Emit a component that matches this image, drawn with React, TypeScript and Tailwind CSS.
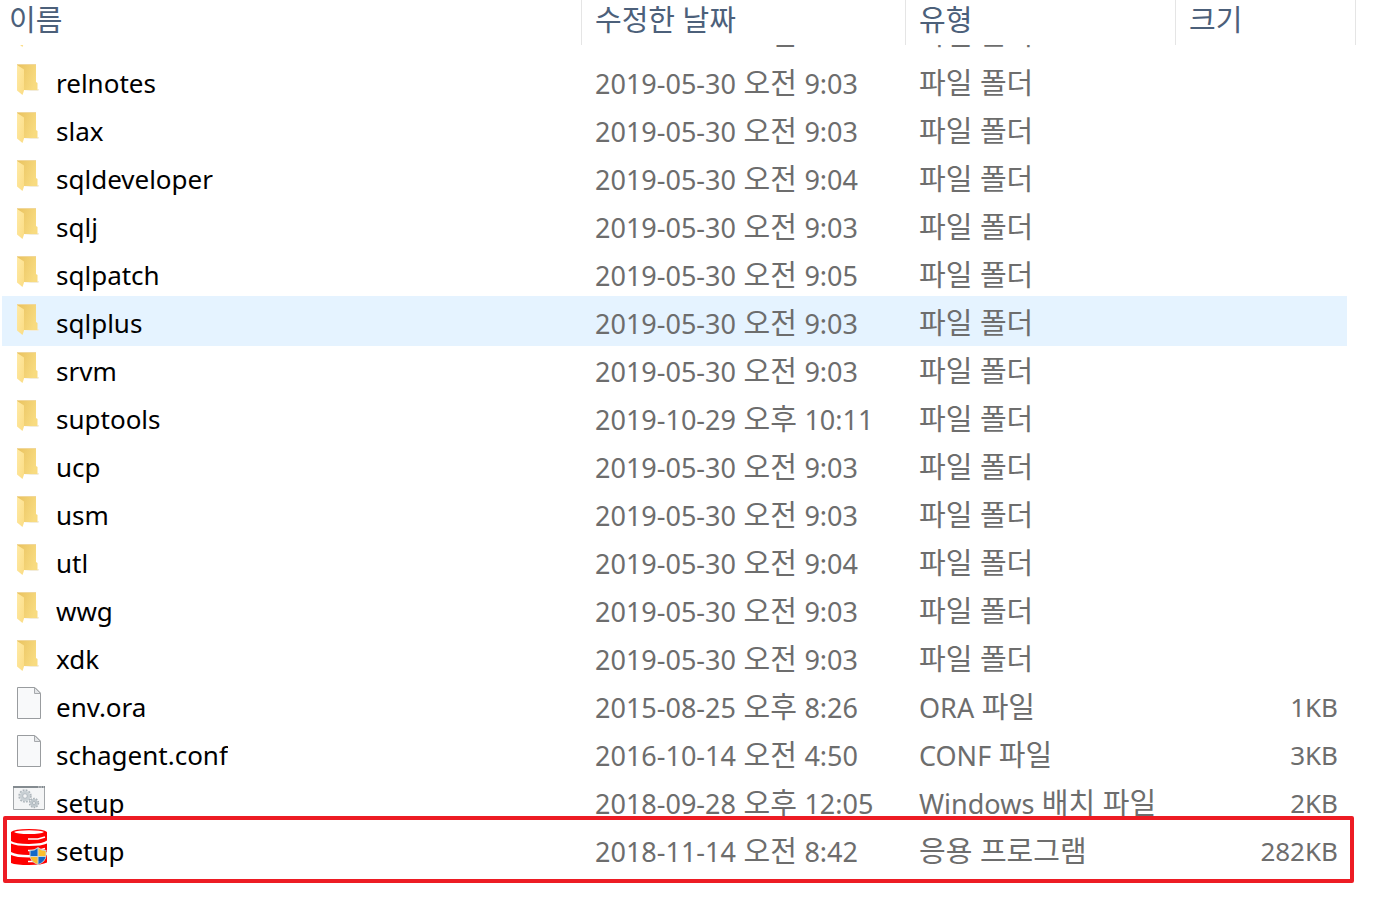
import clsx from 'clsx'

type FileKind = 'folder' | 'page' | 'batch' | 'database'

interface FileEntry {
  name: string
  modified: string
  type: string
  size?: string
  kind: FileKind
  hovered?: boolean
  outlined?: boolean
}

function folder(name: string, modified: string, hovered = false): FileEntry {
  return { name, modified, type: '파일 폴더', kind: 'folder', hovered }
}

const files: FileEntry[] = [
  folder('relnotes', '2019-05-30 오전 9:03'),
  folder('slax', '2019-05-30 오전 9:03'),
  folder('sqldeveloper', '2019-05-30 오전 9:04'),
  folder('sqlj', '2019-05-30 오전 9:03'),
  folder('sqlpatch', '2019-05-30 오전 9:05'),
  folder('sqlplus', '2019-05-30 오전 9:03', true),
  folder('srvm', '2019-05-30 오전 9:03'),
  folder('suptools', '2019-10-29 오후 10:11'),
  folder('ucp', '2019-05-30 오전 9:03'),
  folder('usm', '2019-05-30 오전 9:03'),
  folder('utl', '2019-05-30 오전 9:04'),
  folder('wwg', '2019-05-30 오전 9:03'),
  folder('xdk', '2019-05-30 오전 9:03'),
  { name: 'env.ora', modified: '2015-08-25 오후 8:26', type: 'ORA 파일', size: '1KB', kind: 'page' },
  { name: 'schagent.conf', modified: '2016-10-14 오전 4:50', type: 'CONF 파일', size: '3KB', kind: 'page' },
  { name: 'setup', modified: '2018-09-28 오후 12:05', type: 'Windows 배치 파일', size: '2KB', kind: 'batch' },
  {
    name: 'setup',
    modified: '2018-11-14 오전 8:42',
    type: '응용 프로그램',
    size: '282KB',
    kind: 'database',
    outlined: true,
  },
]

function FolderIcon() {
  return (
    <svg viewBox="0 0 36 36" className="size-9 shrink-0" aria-hidden="true">
      <defs>
        <linearGradient id="folder-back" x1="0" y1="0" x2="1" y2="0.4">
          <stop offset="0" stopColor="#e9c25f" />
          <stop offset="1" stopColor="#f8db80" />
        </linearGradient>
        <linearGradient id="folder-front" x1="0" y1="0" x2="1" y2="1">
          <stop offset="0" stopColor="#ffeaa6" />
          <stop offset="1" stopColor="#fbdc83" />
        </linearGradient>
      </defs>
      <path d="M12 30h15l1-1v-1z" fill="#f3ecd9" />
      <path d="M6 3.500h19V21l1.500 1v7H12z" fill="url(#folder-back)" />
      <path d="M6 3.500h19" stroke="#f1d79a" />
      <path d="M6 4l7 4.500v21L11.500 34 6 29.500z" fill="url(#folder-front)" />
    </svg>
  )
}

function PageIcon() {
  return (
    <svg viewBox="0 0 36 36" className="size-9 shrink-0" aria-hidden="true">
      <path d="M6.500 2.500h17.500l5.500 5.500v25.500h-23z" fill="#f8f9fa" stroke="#999c9f" />
      <path d="M23.500 2.500v6h6z" fill="#e4e6e8" stroke="#a6a9ac" />
    </svg>
  )
}

function BatchIcon() {
  return (
    <svg viewBox="0 0 36 36" className="size-9 shrink-0" aria-hidden="true">
      <path d="M2.500 5.500h31v23h-31z" fill="#f4f5f6" stroke="#a3a7aa" />
      <path d="M2 6h32" stroke="#848b90" strokeWidth="2" />
      <path d="M27 6h1.500m1 0h1.500m1 0h1" stroke="#d9dcde" />
      <g fill="none">
        <circle cx="14" cy="15" r="5.700" stroke="#aeb6bc" strokeWidth="2" strokeDasharray="1.800 1.180" />
        <circle cx="14" cy="15" r="3.800" stroke="#c9d0d4" strokeWidth="2.800" />
        <circle cx="14" cy="15" r="2.300" stroke="#a6afb6" strokeWidth="0.800" />
        <circle cx="23" cy="22" r="4.300" stroke="#a8b0b6" strokeWidth="1.800" strokeDasharray="1.600 1.100" />
        <circle cx="23" cy="22" r="2.800" stroke="#bfc7cc" strokeWidth="2.200" />
        <circle cx="23" cy="22" r="1.500" stroke="#9ea8af" strokeWidth="0.800" />
      </g>
    </svg>
  )
}

function DatabaseIcon() {
  return (
    <svg viewBox="0 0 36 36" className="size-9 shrink-0" aria-hidden="true">
      <g fill="#fe0000">
        <path d="M0 3q3-3 18-3t18 3v8.500q-3 3-18 3.500Q4 15 0 12z" />
        <path d="M0 14.500q5 2.500 18 2.500t18-2.500v8.500q-5 3-18 3T0 23z" />
        <path d="M0 26q5 2.500 18 2.500t18-2.500v7.500q-5 2.500-18 2.500T0 34z" />
      </g>
      <path d="M3 3q3-1.800 15-1.800T33 3q-3 2-15 2T3 3z" fill="#fff" />
      <path d="M17 10h10l7-2M17 21.500h10l7-2M17 32.500h5" fill="none" stroke="#fff" strokeWidth="1.400" />
      <path d="M27 18q3.500 3 8.500 3v5q0 7-8.500 10-8.500-3-8.500-10v-5q5 0 8.500-3z" fill="#c9d3d6" />
      <path d="M26.500 19.500V27H19.500v-5q4 0 7-2.500z" fill="#1468c7" />
      <path d="M27.500 19.500V27h7v-5q-4 0-7-2.500z" fill="#fcc02e" />
      <path d="M26.500 28V35q-6-2.500-7-7z" fill="#fcb92a" />
      <path d="M27.500 28V35q6-2.500 7-7z" fill="#1468c7" />
    </svg>
  )
}

const icons = {
  folder: FolderIcon,
  page: PageIcon,
  batch: BatchIcon,
  database: DatabaseIcon,
}

// Hangul is set a step larger than the Latin letters and digits beside it
function Mixed({ text }: { text: string }) {
  return text
    .split(/([ 가-힣]+)/)
    .filter(Boolean)
    .map((part, i) =>
      /[가-힣]/.test(part) ? (
        <span key={i} className="text-[29px] leading-none whitespace-pre">
          {part}
        </span>
      ) : (
        part
      ),
    )
}

function FileRow({ file }: { file: FileEntry }) {
  const Icon = icons[file.kind]
  return (
    <tr className="relative h-12 text-[#6d6d6d]">
      <td className="p-0">
        {file.hovered && <span className="absolute -inset-y-px right-[9px] left-0.5 -z-10 bg-[#e5f3ff]" />}
        {file.outlined && (
          <span className="absolute -top-[9px] right-0.5 -bottom-[10px] left-[3px] rounded-xs border-4 border-[#ed1c24]" />
        )}
        <div className="flex h-12 gap-[9px] pl-[11px]">
          <span className="pt-1">
            <Icon />
          </span>
          <span className="truncate pt-1 text-[26px] leading-11 text-black">{file.name}</span>
        </div>
      </td>
      <td className="p-0 pt-1.5 pl-[13px] leading-[42px]">
        <Mixed text={file.modified} />
      </td>
      <td className="p-0 pt-1.5 pl-[13px] leading-[42px]">
        <Mixed text={file.type} />
      </td>
      <td className="p-0 pt-1 pr-[18px] text-right text-[26px] leading-11">{file.size}</td>
    </tr>
  )
}

// Row that is scrolled under the header, only its lowest strip shows
function ClippedRow({ modified, type }: { modified: string; type: string }) {
  const clip = 'flex h-3 items-end overflow-hidden'
  return (
    <tr className="text-[#6d6d6d]">
      <td className="p-0">
        <div className={clsx(clip, 'pl-[11px]')}>
          <span className="h-11">
            <FolderIcon />
          </span>
        </div>
      </td>
      <td className="p-0">
        <div className={clsx(clip, 'pl-[13px] leading-11')}>
          <span>
            <Mixed text={modified} />
          </span>
        </div>
      </td>
      <td className="p-0">
        <div className={clsx(clip, 'pl-[13px] leading-11')}>
          <span>
            <Mixed text={type} />
          </span>
        </div>
      </td>
      <td className="p-0" />
    </tr>
  )
}

export default function App() {
  const head = 'border-r border-[#e5e5e5] p-0 pb-[5px] text-left font-normal'
  return (
    <main className="isolate min-h-screen overflow-hidden bg-white pr-7 font-['Noto_Sans','Noto_Sans_CJK_KR',sans-serif] text-[27px]">
      <table className="w-full table-fixed border-separate border-spacing-0 whitespace-nowrap">
        <colgroup>
          <col />
          <col className="w-[324px]" />
          <col className="w-[270px]" />
          <col className="w-[180px]" />
        </colgroup>
        <thead>
          <tr className="h-[45px] text-[29px] leading-9 text-[#4c607a]">
            <th scope="col" className={clsx(head, 'pl-[9px]')}>이름</th>
            <th scope="col" className={clsx(head, 'pl-[13px]')}>수정한 날짜</th>
            <th scope="col" className={clsx(head, 'pl-[13px]')}>유형</th>
            <th scope="col" className={clsx(head, 'pl-[13px]')}>크기</th>
          </tr>
        </thead>
        <tbody>
          <ClippedRow modified="2019-05-30 오전 9:03" type="파일 폴더" />
          {files.map((file) => (
            <FileRow key={file.name + file.kind} file={file} />
          ))}
        </tbody>
      </table>
    </main>
  )
}
